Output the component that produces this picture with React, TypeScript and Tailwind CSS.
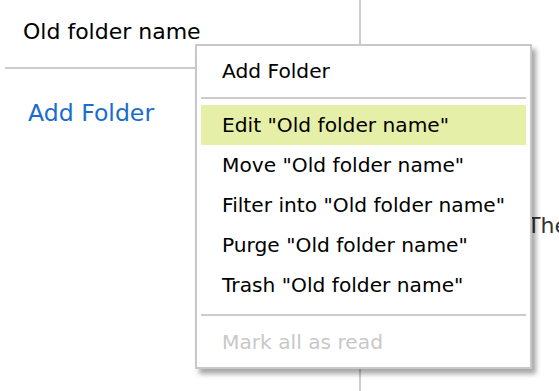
import React from 'react'

const folder = 'Old folder name'

const items = [
    `Edit "${folder}"`,
    `Move "${folder}"`,
    `Filter into "${folder}"`,
    `Purge "${folder}"`,
    `Trash "${folder}"`,
]

function ContextMenu() {
    return (
        <div className="absolute left-[195px] top-[44px] w-[337px] bg-white border-2 border-[#c8c8c8] shadow-[4px_5px_5px_rgba(0,0,0,0.35)] px-[4px] pt-[5px] pb-[5px] text-[20.2px]">
            <div className="h-[40px] flex items-center pl-[21px]">Add Folder</div>
            <div className="my-[6px] h-[2px] bg-[#cccccc]" />
            {items.map((label, i) => (
                <div key={label} className={`h-[40px] flex items-center pl-[21px] ${i === 0 ? 'bg-[#e6efa8]' : ''}`}>
                    {label}
                </div>
            ))}
            <div className="mt-[9px] mb-[6px] h-[2px] bg-[#cccccc]" />
            <div className="h-[40px] flex items-center pl-[21px] text-[#c8c8c8]">Mark all as read</div>
        </div>
    )
}

export default function App() {
    return (
        <div className="relative w-[559px] h-[391px] bg-white overflow-hidden text-black" style={{ fontFamily: '"DejaVu Sans", sans-serif' }}>
            <div className="flex h-full">
                <div className="w-[361px] shrink-0 border-r-2 border-[#cdcdcd] pl-[5px]">
                    <div className="h-[69px] border-b-2 border-[#cccccc] flex items-center pl-[18px] pb-[4px] text-[22px]">
                        {folder}
                    </div>
                    <div className="pl-[23px] pt-[27px] text-[23.6px] text-[#1a6dcc]">Add Folder</div>
                </div>
                <div className="flex-1 pt-[209px] pl-[166px] text-[22px] text-[#333333] whitespace-nowrap">The</div>
            </div>
            <ContextMenu />
        </div>
    )
}
